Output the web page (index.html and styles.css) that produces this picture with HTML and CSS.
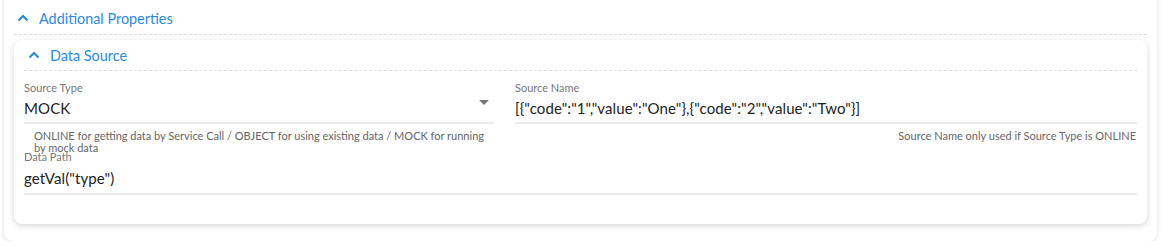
FILE: index.html
```html
<!DOCTYPE html>
<html lang="en">
  <head>
    <meta charset="UTF-8" />
    <meta name="viewport" content="width=device-width, initial-scale=1.0" />
    <title>Additional Properties</title>
    <link rel="stylesheet" href="styles.css">
  </head>
  <body>
    <div class="panel">
      <div class="panel-header">
        <svg class="chevron" width="12" height="8" viewBox="0 0 12 8">
          <polyline points="1.5,6.5 6,2 10.5,6.5" />
        </svg>
        <span>Additional Properties</span>
      </div>

      <div class="card">
        <div class="card-header">
          <svg class="chevron" width="12" height="8" viewBox="0 0 12 8">
            <polyline points="1.5,6.5 6,2 10.5,6.5" />
          </svg>
          <span>Data Source</span>
        </div>

        <div class="fields">
          <div class="field">
            <div class="field-label">Source Type</div>
            <div class="field-value select">
              MOCK
              <span class="arrow"></span>
            </div>
            <div class="hint">ONLINE for getting data by Service Call / OBJECT for using existing data / MOCK for running by mock data</div>
          </div>

          <div class="field">
            <div class="field-label">Source Name</div>
            <div class="field-value">[{"code":"1","value":"One"},{"code":"2","value":"Two"}]</div>
            <div class="hint right">Source Name only used if Source Type is ONLINE</div>
          </div>

          <div class="field wide">
            <div class="field-label">Data Path</div>
            <div class="field-value tall">getVal("type")</div>
          </div>
        </div>
      </div>
    </div>
  </body>
</html>
```

FILE: styles.css
```css
body {
  margin: 0;
  background-color: #fff;
  font-family: Lato, "Noto Sans", sans-serif;
  color: #222;
}

.panel {
  margin: -10px 6px 0 4px;
  padding: 10px 10px 17px;
  background-color: #fff;
  border-radius: 0 0 8px 8px;
  box-shadow: 0 1px 5px rgba(0, 0, 0, 0.14);
}

.panel-header,
.card-header {
  display: flex;
  align-items: center;
  color: #2a8be6;
  font-size: 14.4px;
  border-bottom: 1px dashed #dcdcdc;
  box-sizing: border-box;
}

.panel-header {
  height: 35px;
  padding: 2px 0 0 3px;
}

.card-header {
  height: 31px;
  padding-left: 4px;
}

.chevron {
  margin-right: 10px;
  fill: none;
  stroke: #2a8be6;
  stroke-width: 2.2;
}

.card {
  margin-top: 5px;
  padding: 0 10px 29px;
  background-color: #fff;
  border-radius: 8px;
  box-shadow: 0 2px 6px rgba(0, 0, 0, 0.16);
}

.fields {
  display: grid;
  grid-template-columns: 470px 1fr;
  column-gap: 21px;
  padding-top: 10px;
}

.field.wide {
  grid-column: 1 / 3;
}

.field-label {
  height: 14px;
  line-height: 14px;
  font-size: 11px;
  color: #777;
}

.field-value {
  position: relative;
  height: 27px;
  line-height: 27px;
  font-size: 15px;
  letter-spacing: 0.1px;
  border-bottom: 2px solid #ebebeb;
}

.field-value.tall {
  height: 29px;
  line-height: 29px;
}

.arrow {
  position: absolute;
  top: 5px;
  right: 5px;
  border-left: 5px solid transparent;
  border-right: 5px solid transparent;
  border-top: 5px solid #777;
}

.hint {
  height: 20px;
  padding: 6px 10px 0;
  line-height: 12px;
  font-size: 11px;
  color: #666;
}

.hint.right {
  padding-right: 1px;
  text-align: right;
}
```
